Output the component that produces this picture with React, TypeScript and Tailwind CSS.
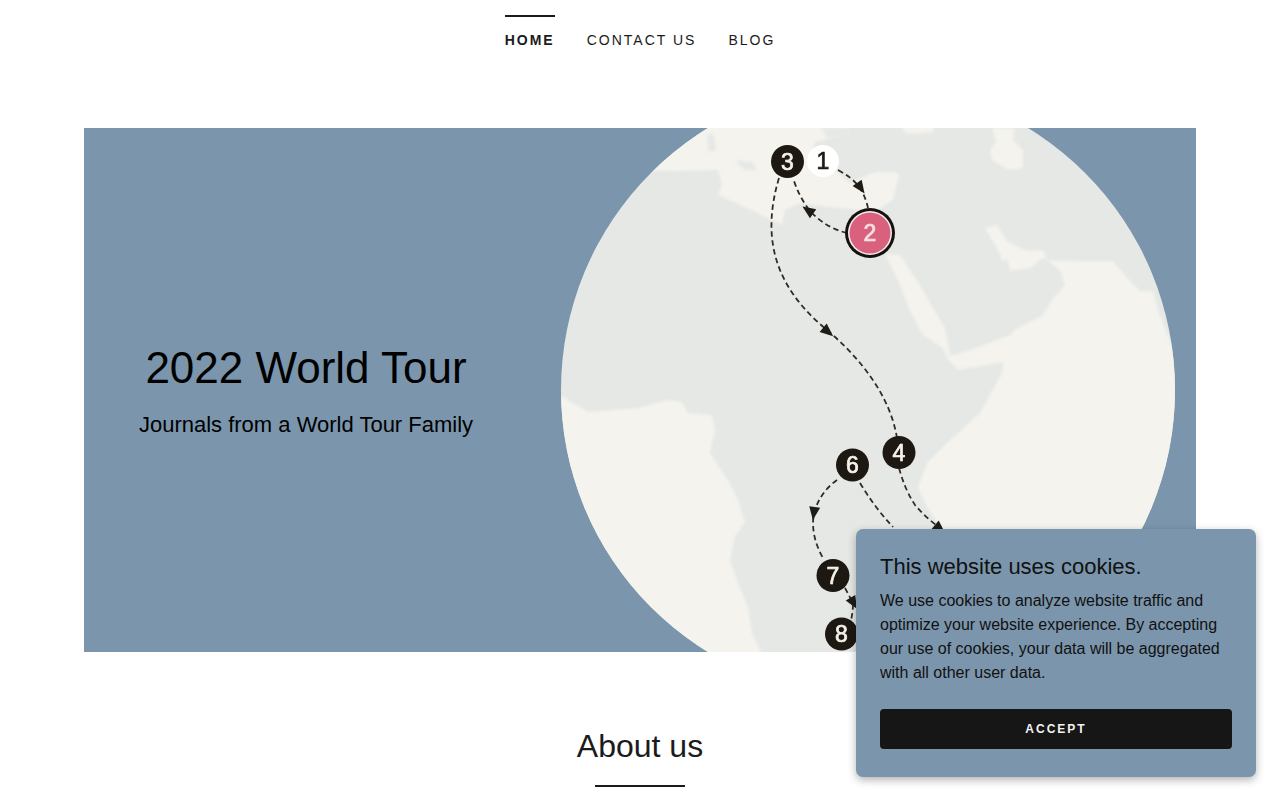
const routes = [
  "M838 170 Q853 178 860 188 Q866 198 868 208",
  "M847 233 Q826 228 810 211 Q799 197 793 178",
  "M779 178 C762 235 772 285 827 330 C860 358 890 395 897 438",
  "M899 468 Q905 490 915 505 Q926 518 940 528",
  "M860 483 Q875 508 893 527",
  "M837 480 Q820 492 814 513 Q810 535 823 558",
  "M845 588 L853 603 Q853 612 851 620",
];

const arrows = [
  { x: 860, y: 187, angle: 145 },
  { x: 809, y: 211, angle: 305 },
  { x: 827, y: 331, angle: 130 },
  { x: 939, y: 528, angle: 130 },
  { x: 814, y: 512, angle: 188 },
  { x: 853, y: 602, angle: 150 },
];

const pins = [
  { n: "3", x: 787.5, y: 161.5 },
  { n: "4", x: 899, y: 452.5 },
  { n: "6", x: 852.5, y: 465 },
  { n: "7", x: 833, y: 575.5 },
  { n: "8", x: 841.5, y: 634 },
];

function GlobeMap() {
  return (
    <svg viewBox="528 128 668 524" className="w-[668px] h-[524px] shrink-0">
      <defs>
        <clipPath id="globe">
          <circle cx="868" cy="390" r="307" />
        </clipPath>
      </defs>
      <g clipPath="url(#globe)">
        <rect x="528" y="128" width="668" height="524" fill="#e5e8e5" />
        <g fill="#f4f3ee" className="blur-[1.5px]">
          {/* north coast */}
          <polygon points="640,171 678,171 718,170 722,185 718,195 755,212 782,225 785,210 800,203 830,207 860,210 875,212 893,200 899,175 895,172 875,172 850,183 835,170 812,165 815,142 850,134 845,120 690,120" />
          {/* east */}
          <polygon points="885,254 900,255 920,285 933,308 945,328 950,356 970,350 1010,335 1017,328 1043,315 1053,298 1065,285 1060,271 1043,256 1043,250 1047,260 1073,261 1113,261 1130,281 1140,291 1153,291 1158,310 1170,341 1190,388 1190,660 930,660 940,527 927,507 918,487 927,463 947,443 980,413 1002,373 1003,362 958,370 948,360 943,348 923,335 910,311 900,285" />
          <polygon points="985,228 997,225 1007,241 1027,251 1042,250 1047,260 1043,258 1030,268 1010,271 1007,258 1002,262 1000,254" />
          <polygon points="992,128 1015,128 1013,140 1023,150 1023,168 1008,170 992,160 990,150 996,142" />
          <polygon points="900,124 935,124 933,132 915,134 905,133" />
          {/* west */}
          <polygon points="555,390 563,397 588,412 638,408 668,400 682,402 688,413 712,415 715,430 710,453 728,480 738,500 745,522 735,537 730,560 738,583 748,607 752,633 765,660 550,660" />
        </g>
        <g fill="#e5e8e5" className="blur-[1.5px]">
          <polygon points="707,135 713,134 716,150 709,152" />
          <polygon points="735,161 752,162 757,170 745,170" />
          <polygon points="822,128 852,128 846,137 826,138" />
        </g>
      </g>
      <g className="blur-[0.4px]">
        <g fill="none" stroke="#2f2c28" strokeWidth="1.8" strokeDasharray="5.5 3.5">
          {routes.map((d) => (
            <path key={d} d={d} />
          ))}
        </g>
        {arrows.map((a) => (
          <polygon
            key={`${a.x}-${a.y}`}
            points="0,-8 5.5,5 -5.5,5"
            fill="#1f1b17"
            transform={`translate(${a.x} ${a.y}) rotate(${a.angle})`}
          />
        ))}
        <g fontFamily="'Liberation Sans', Arial, sans-serif" fontSize="23" textAnchor="middle" strokeWidth="0.7">
          <circle cx="823" cy="161" r="16" fill="#ffffff" />
          <text x="823" y="169" fill="#1e1812" stroke="#1e1812">1</text>
          <circle cx="870" cy="233" r="25" fill="#15110e" />
          <circle cx="870" cy="233" r="22" fill="#f6eef0" />
          <circle cx="870" cy="233" r="20.5" fill="#d9617e" />
          <text x="870" y="241" fill="#f6dfe3" stroke="#f6dfe3">2</text>
          {pins.map((p) => (
            <g key={p.n}>
              <circle cx={p.x} cy={p.y} r="16.5" fill="#1e1812" />
              <text x={p.x} y={p.y + 8} fill="#f5f2ea" stroke="#f5f2ea">{p.n}</text>
            </g>
          ))}
        </g>
      </g>
    </svg>
  );
}

export default function App() {
  return (
    <div className="relative h-[800px] overflow-hidden bg-white font-['Liberation_Sans',Arial,sans-serif] text-[#1b1b1b]">
      <nav className="flex justify-center gap-8 pt-[15px] text-[14px] leading-[18px] tracking-[2px] uppercase">
        <a className="border-t-2 border-[#1b1b1b] pt-[14px] font-bold w-[50px] whitespace-nowrap">Home</a>
        <a className="border-t-2 border-transparent pt-[14px]">Contact Us</a>
        <a className="border-t-2 border-transparent pt-[14px]">Blog</a>
      </nav>

      <section className="flex mt-[79px] mx-[84px] h-[524px] bg-[#7b96ac] overflow-hidden">
        <div className="w-[444px] shrink-0 flex flex-col items-center justify-center text-center text-black pt-[1px]">
          <h1 className="text-[44px] leading-[54px] whitespace-nowrap">2022 World Tour</h1>
          <p className="text-[22px] leading-[30px] mt-[15px] whitespace-nowrap">Journals from a World Tour Family</p>
        </div>
        <GlobeMap />
      </section>

      <section className="flex flex-col items-center mt-[74px]">
        <h2 className="text-[32px] leading-[40px]">About us</h2>
        <div className="w-[90px] h-[2px] bg-[#1b1b1b] mt-[19px]" />
      </section>

      <div className="absolute left-[856px] top-[529px] w-[400px] h-[248px] rounded-[7px] bg-[#7b96ac] p-6 shadow-[0_3px_8px_rgba(0,0,0,0.3)] text-[#111]">
        <h4 className="text-[22px] leading-[28px] mb-[8px]">This website uses cookies.</h4>
        <p className="text-[16px] leading-[24px]">
          We use cookies to analyze website traffic and optimize your website experience. By accepting our use of
          cookies, your data will be aggregated with all other user data.
        </p>
        <button className="mt-[24px] w-full h-[40px] rounded-[4px] bg-[#161616] text-[#f2f2f2] text-[12px] font-bold tracking-[2px] uppercase">
          Accept
        </button>
      </div>
    </div>
  );
}
